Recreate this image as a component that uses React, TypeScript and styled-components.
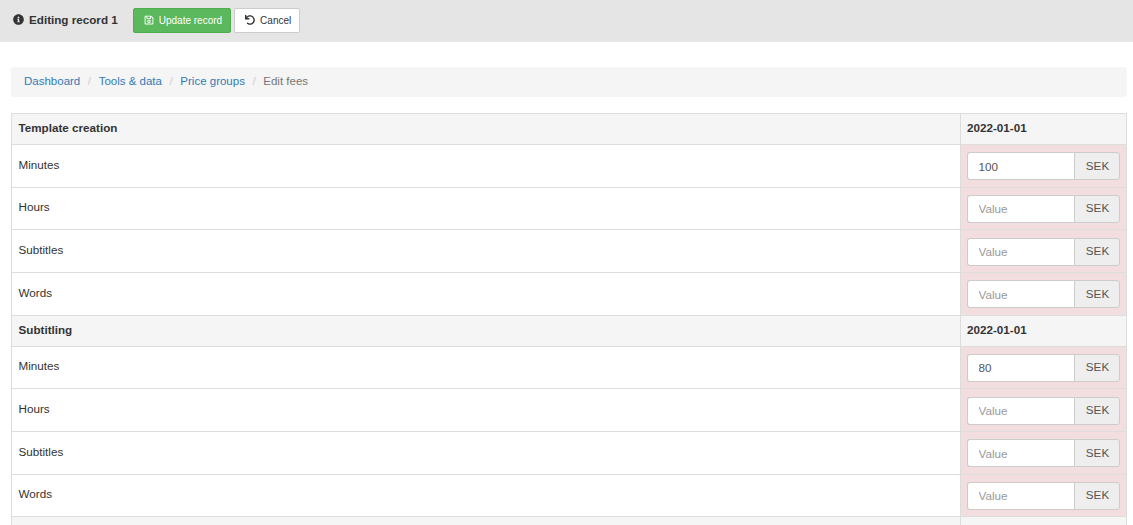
import styled, { createGlobalStyle } from "styled-components";
import { FaInfoCircle, FaRegSave, FaUndo } from "react-icons/fa";

const GlobalStyle = createGlobalStyle`
    html, body {
        margin: 0;
        height: 525px;
        overflow: hidden;
        background: #fff;
        font-family: "Liberation Sans", Arial, sans-serif;
        font-size: 11.67px;
        color: #333;
    }
`;

const Toolbar = styled.div`
    display: flex;
    align-items: center;
    height: 42px;
    padding: 0 0 0 13px;
    background: #e5e5e5;
`;

const ToolbarTitle = styled.div`
    display: flex;
    align-items: center;
    gap: 5px;
    margin-right: 15px;
    margin-top: -3px;
    font-size: 11.67px;
    font-weight: bold;
    color: #333;

    svg {
        width: 11px;
        height: 11px;
    }
`;

const Button = styled.button<{ $primary?: boolean }>`
    display: flex;
    align-items: center;
    gap: 5px;
    height: 25px;
    margin-right: 3px;
    margin-top: -2px;
    padding: 0 8px 0 10px;
    border: 1px solid ${(p) => (p.$primary ? "#4cae4c" : "#ccc")};
    border-radius: 2px;
    background: ${(p) => (p.$primary ? "#5cb85c" : "#fff")};
    color: ${(p) => (p.$primary ? "#fff" : "#333")};
    font-family: inherit;
    font-size: 10px;

    svg {
        width: 10px;
        height: 10px;
    }
`;

const Content = styled.div`
    padding: 25px 6px 0 11px;
`;

const Breadcrumb = styled.ol`
    display: flex;
    align-items: center;
    box-sizing: border-box;
    height: 30px;
    margin: 0 0 16px;
    padding: 0 13px 3px;
    list-style: none;
    border-radius: 3px;
    background: #f5f5f5;
    font-size: 11.5px;
`;

const Crumb = styled.li<{ $active?: boolean }>`
    color: ${(p) => (p.$active ? "#777" : "#337ab7")};

    &:not(:first-child)::before {
        content: "/";
        padding: 0 7.6px;
        color: #ccc;
    }
`;

const FeeTable = styled.table`
    width: 100%;
    border-collapse: collapse;
    table-layout: fixed;
    font-size: 11.67px;
    color: #333;
`;

const HeadRow = styled.tr`
    height: 31px;
    background: #f5f5f5;
`;

const HeadCell = styled.th`
    padding: 0 6px 3px 6.5px;
    border: 1px solid #ddd;
    text-align: left;
    font-size: 11.67px;
    font-weight: bold;
`;

const DateCell = styled(HeadCell)`
    width: 153px;
`;

const BodyRow = styled.tr`
    height: 42.67px;
`;

const LabelCell = styled.td`
    padding: 0 6px 3px 6.5px;
    border: 1px solid #ddd;
`;

const ValueCell = styled.td`
    padding: 1px 6px 0 6px;
    border: 1px solid #ddd;
    border-color: #ddd #e8d5d5;
    border-right-color: #ddd;
    background: #f2dede;
`;

const InputGroup = styled.div`
    display: flex;
    height: 28px;
`;

const ValueInput = styled.input`
    flex: 1;
    min-width: 0;
    box-sizing: border-box;
    height: 28px;
    padding: 0 11px;
    border: 1px solid #ccc;
    border-right: 0;
    border-radius: 3px 0 0 3px;
    background: #fff;
    outline: none;
    font-family: inherit;
    font-size: 11.67px;
    color: #555;

    &::placeholder {
        color: #999;
        opacity: 1;
    }
`;

const Addon = styled.span`
    display: flex;
    align-items: center;
    justify-content: center;
    box-sizing: border-box;
    width: 46px;
    padding: 0 0 2px 1px;
    border: 1px solid #ccc;
    border-radius: 0 3px 3px 0;
    background: #eee;
    font-size: 11.67px;
    color: #555;
`;

const rowLabels = ["Minutes", "Hours", "Subtitles", "Words"];

const groups = [
    { name: "Template creation", first: "100" },
    { name: "Subtitling", first: "80" },
];

export default function App() {
    return (
        <>
            <GlobalStyle />
            <Toolbar>
                <ToolbarTitle>
                    <FaInfoCircle />
                    Editing record 1
                </ToolbarTitle>
                <Button $primary>
                    <FaRegSave />
                    Update record
                </Button>
                <Button>
                    <FaUndo />
                    Cancel
                </Button>
            </Toolbar>
            <Content>
                <Breadcrumb>
                    <Crumb>Dashboard</Crumb>
                    <Crumb>Tools &amp; data</Crumb>
                    <Crumb>Price groups</Crumb>
                    <Crumb $active>Edit fees</Crumb>
                </Breadcrumb>
                <FeeTable>
                    <tbody>
                        {groups.map((group) => (
                            <GroupRows key={group.name} name={group.name} first={group.first} />
                        ))}
                        <HeadRow>
                            <HeadCell />
                            <DateCell />
                        </HeadRow>
                    </tbody>
                </FeeTable>
            </Content>
        </>
    );
}

function GroupRows({ name, first }: { name: string; first: string }) {
    return (
        <>
            <HeadRow>
                <HeadCell>{name}</HeadCell>
                <DateCell>2022-01-01</DateCell>
            </HeadRow>
            {rowLabels.map((label, i) => (
                <BodyRow key={label}>
                    <LabelCell>{label}</LabelCell>
                    <ValueCell>
                        <InputGroup>
                            <ValueInput
                                placeholder="Value"
                                defaultValue={i === 0 ? first : undefined}
                            />
                            <Addon>SEK</Addon>
                        </InputGroup>
                    </ValueCell>
                </BodyRow>
            ))}
        </>
    );
}
